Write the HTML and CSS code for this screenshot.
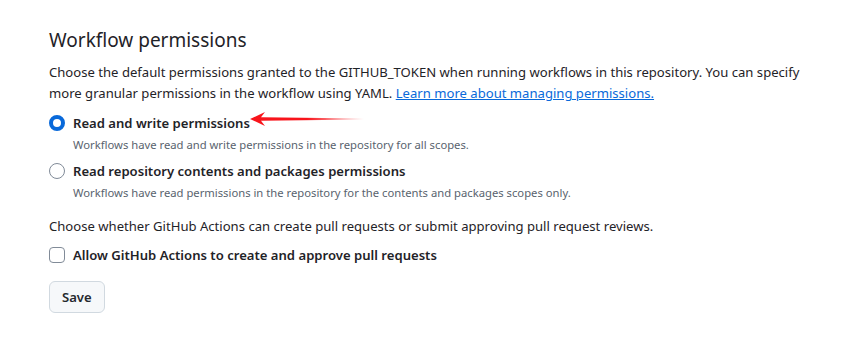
FILE: index.html
```html
<!DOCTYPE html>
<html lang="en">
  <head>
    <meta charset="UTF-8" />
    <title>Actions settings</title>
    <meta name="viewport" content="width=device-width, initial-scale=1" />
    <link rel="stylesheet" href="styles.css">
  </head>

  <body>
    <div class="panel">
      <h2 class="panel-title">Workflow permissions</h2>

      <p class="panel-text">
        Choose the default permissions granted to the GITHUB_TOKEN when running workflows in this repository. You can specify
        more granular permissions in the workflow using YAML.
        <a href="#" class="link">Learn more about managing permissions.</a>
      </p>

      <!-- Token permission choices -->
      <div class="choice">
        <label class="choice-row">
          <input type="radio" class="radio" name="perm" checked />
          <span class="choice-label">Read and write permissions</span>
        </label>
        <p class="choice-note">Workflows have read and write permissions in the repository for all scopes.</p>

        <!-- annotation arrow pointing at the selected option -->
        <svg class="arrow" width="114" height="14" viewBox="0 0 114 14">
          <defs>
            <linearGradient id="fade" x1="0" x2="1" y1="0" y2="0">
              <stop offset="0" stop-color="#f8141b" />
              <stop offset="0.5" stop-color="#f8141b" />
              <stop offset="1" stop-color="#f8141b" stop-opacity="0" />
            </linearGradient>
          </defs>
          <polygon points="0,7 15,0 11,5.2 114,6.4 114,7.6 11,8.8 15,14" fill="url(#fade)" />
        </svg>
      </div>

      <div class="choice">
        <label class="choice-row">
          <input type="radio" class="radio" name="perm" />
          <span class="choice-label">Read repository contents and packages permissions</span>
        </label>
        <p class="choice-note">Workflows have read permissions in the repository for the contents and packages scopes only.</p>
      </div>

      <p class="panel-text gap-top">
        Choose whether GitHub Actions can create pull requests or submit approving pull request reviews.
      </p>

      <label class="choice-row">
        <input type="checkbox" class="check" />
        <span class="choice-label">Allow GitHub Actions to create and approve pull requests</span>
      </label>

      <button class="button">Save</button>
    </div>
  </body>
</html>
```

FILE: styles.css
```css
body {
  font-family: "Noto Sans", "Open Sans", sans-serif;
  color: #1f2328;
  background: #ffffff;
  margin: 0;
  padding: 0;
}

.panel {
  width: 770px;
  padding: 25px 0 0 49px;
}

.panel-title {
  font-size: 19px;
  font-weight: 400;
  line-height: 30px;
  margin: 0 0 7px 0;
}

.panel-text {
  font-size: 13.1px;
  line-height: 21px;
  margin: 0 0 7px 0;
}

.gap-top {
  margin-top: 14px;
  margin-bottom: 6px;
}

.link {
  color: #0969da;
  text-decoration: underline;
}

.choice {
  position: relative;
}

.choice-row {
  display: flex;
  align-items: center;
  gap: 8px;
  height: 24px;
}

.choice-label {
  font-size: 13.1px;
  font-weight: 600;
}

.choice-note {
  font-size: 11.25px;
  line-height: 18px;
  color: #59636e;
  margin: 1px 0 5px 24px;
}

.radio {
  appearance: none;
  width: 16px;
  height: 16px;
  margin: 0;
  border: 1px solid #818b98;
  border-radius: 50%;
  background: #ffffff;
}

.radio:checked {
  border: 4px solid #0969da;
}

.check {
  appearance: none;
  width: 16px;
  height: 16px;
  margin: 0;
  border: 1px solid #818b98;
  border-radius: 4px;
  background: #ffffff;
}

.arrow {
  position: absolute;
  left: 201px;
  top: 1px;
}

.button {
  display: block;
  margin-top: 14px;
  padding: 0 12px;
  height: 32px;
  font-family: inherit;
  font-size: 13.1px;
  font-weight: 600;
  color: #25292e;
  background-color: #f6f8fa;
  border: 1px solid #d1d9e0;
  border-radius: 6px;
}
```
